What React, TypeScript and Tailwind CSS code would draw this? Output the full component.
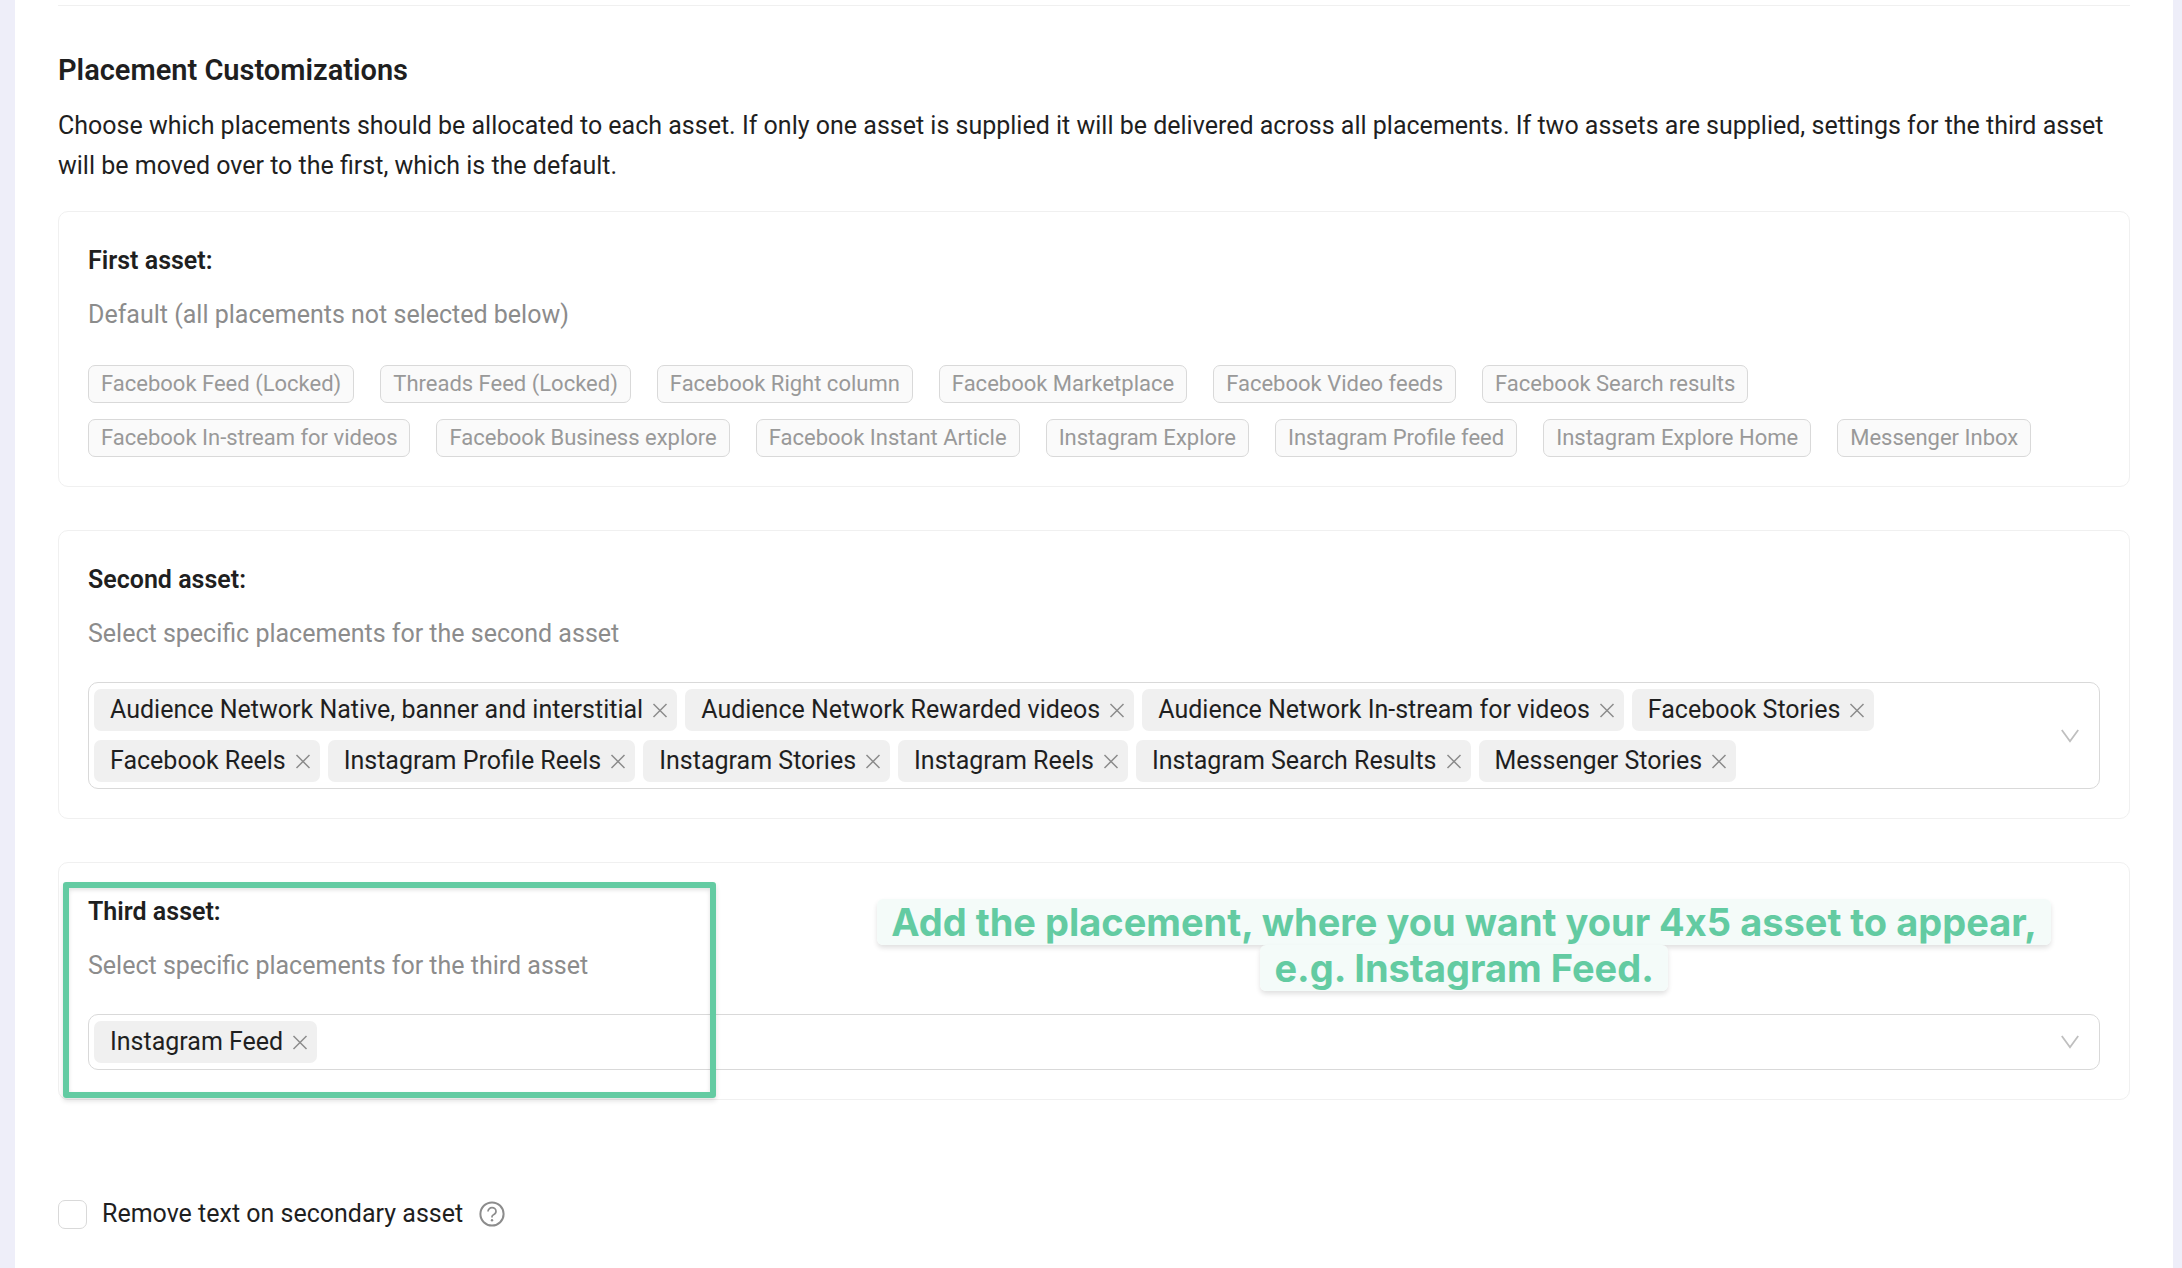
import { useState } from 'react'

const defaultPlacements = [
  'Facebook Feed (Locked)',
  'Threads Feed (Locked)',
  'Facebook Right column',
  'Facebook Marketplace',
  'Facebook Video feeds',
  'Facebook Search results',
  'Facebook In-stream for videos',
  'Facebook Business explore',
  'Facebook Instant Article',
  'Instagram Explore',
  'Instagram Profile feed',
  'Instagram Explore Home',
  'Messenger Inbox',
]

const secondPlacements = [
  'Audience Network Native, banner and interstitial',
  'Audience Network Rewarded videos',
  'Audience Network In-stream for videos',
  'Facebook Stories',
  'Facebook Reels',
  'Instagram Profile Reels',
  'Instagram Stories',
  'Instagram Reels',
  'Instagram Search Results',
  'Messenger Stories',
]

function PlacementSelect({ id, initial }: { id: string; initial: string[] }) {
  const [items, setItems] = useState(initial)

  return (
    <div className="flex items-center rounded-[10px] border border-[#d9d9d9] bg-white py-[6px] pl-[5px] pr-5">
      <div className="flex min-w-0 flex-1 flex-wrap gap-x-2 gap-y-[9px]">
        {items.map((name) => (
          <span key={name} className="flex h-[42px] items-center gap-2 rounded-[7px] bg-[#f0f0f0] pb-px pl-4 pr-2">
            {name}
            <button
              type="button"
              aria-label={`Remove ${name}`}
              onClick={() => setItems(items.filter((i) => i !== name))}
              className="text-[#8c8c8c]"
            >
              <svg width="18" height="18" viewBox="0 0 18 18" fill="none" stroke="currentColor" strokeWidth="1.5">
                <path d="M2.5 3l13 13M15.5 3l-13 13" />
              </svg>
            </button>
          </span>
        ))}
        <input id={id} type="text" className="h-[42px] w-2 bg-transparent outline-none" />
      </div>
      <button type="button" aria-label="Open list" className="text-[#bfbfbf]">
        <svg width="18" height="18" viewBox="0 0 18 18" fill="none" stroke="currentColor" strokeWidth="1.8">
          <path d="M.8 3L9 14.200l8.200-11.200" />
        </svg>
      </button>
    </div>
  )
}

export default function App() {
  const [removeText, setRemoveText] = useState(false)

  return (
    <div className="min-h-screen bg-[#eeeef9] pl-[15px] pr-[9px] font-['Roboto',sans-serif] text-[25px] leading-[40px] text-[#1f1f1f]">
      <main className="min-h-screen bg-white px-[43px] pt-[5px]">
        <hr className="border-[#f0f0f0]" />

        <h2 className="mt-11 text-[29px] font-semibold">Placement Customizations</h2>
        <p className="mt-4">
          Choose which placements should be allocated to each asset. If only one asset is supplied it will be delivered
          across all placements. If two assets are supplied, settings for the third asset will be moved over to the first,
          which is the default.
        </p>

        <section className="mt-[25px] rounded-[10px] border border-[#f0f0f0] px-[29px] pb-[29px] pt-[29px]">
          <h3 className="font-semibold">First asset:</h3>
          <p className="mt-[14px] text-[#8c8c8c]">Default (all placements not selected below)</p>
          <ul className="mt-[30px] flex flex-wrap gap-x-[26px] gap-y-4 pr-10 text-[22px] leading-[36px] text-[#999999]">
            {defaultPlacements.map((name) => (
              <li key={name} className="rounded-[7px] border border-[#d9d9d9] bg-[#fafafa] px-3">
                {name}
              </li>
            ))}
          </ul>
        </section>

        <section className="mt-[43px] rounded-[10px] border border-[#f0f0f0] px-[29px] pb-[29px] pt-[29px]">
          <h3 className="font-semibold">Second asset:</h3>
          <label htmlFor="second-asset" className="mb-7 mt-[14px] block text-[#8c8c8c]">
            Select specific placements for the second asset
          </label>
          <PlacementSelect id="second-asset" initial={secondPlacements} />
        </section>

        <section className="relative mt-[43px] rounded-[10px] border border-[#f0f0f0] px-[29px] pb-[29px] pt-[29px]">
          <h3 className="font-semibold">Third asset:</h3>
          <label htmlFor="third-asset" className="mb-7 mt-[14px] block text-[#8c8c8c]">
            Select specific placements for the third asset
          </label>
          <PlacementSelect id="third-asset" initial={['Instagram Feed']} />

          {/* highlight frame and its caption */}
          <div className="pointer-events-none absolute bottom-px left-1 top-[19px] w-[653px] rounded-[3px] border-[6px] border-[#63cba2] shadow-[0_3px_5px_rgba(0,0,0,0.12),inset_0_2px_4px_rgba(0,0,0,0.12)]" />
          <p className="absolute right-[78px] top-9 text-center font-['Inter',sans-serif] text-[38px] font-bold leading-[46px] text-[#63cba2] [font-feature-settings:'calt'_0]">
            <span className="rounded-md bg-[#f4fbf9] box-decoration-clone px-[14px] shadow-[0_3px_5px_rgba(0,0,0,0.12)]">
              Add the placement, where you want your 4x5 asset to appear,
              <br />
              e.g. Instagram Feed.
            </span>
          </p>
        </section>

        <div className="mt-[94px] flex items-center">
          <input
            id="remove-text"
            type="checkbox"
            checked={removeText}
            onChange={(e) => setRemoveText(e.target.checked)}
            className="size-[29px] appearance-none rounded-[7px] border border-[#d9d9d9] bg-white checked:bg-[#63cba2]"
          />
          <label htmlFor="remove-text" className="ml-[15px]">Remove text on secondary asset</label>
          <button type="button" aria-label="Help" className="ml-4 text-[#8c8c8c]">
            <svg width="26" height="26" viewBox="0 0 26 26" fill="none" stroke="currentColor" strokeWidth="2">
              <circle cx="13" cy="13" r="11.600" />
              <path d="M9 10.500c0-2.200 1.800-3.800 4-3.800s4 1.500 4 3.600c0 1.700-1.100 2.900-2.500 3.400-.9.400-1.500 1-1.500 2v.8" strokeWidth="1.700" />
              <circle cx="13" cy="19.200" r="1.200" fill="currentColor" stroke="none" />
            </svg>
          </button>
        </div>
      </main>
    </div>
  )
}
